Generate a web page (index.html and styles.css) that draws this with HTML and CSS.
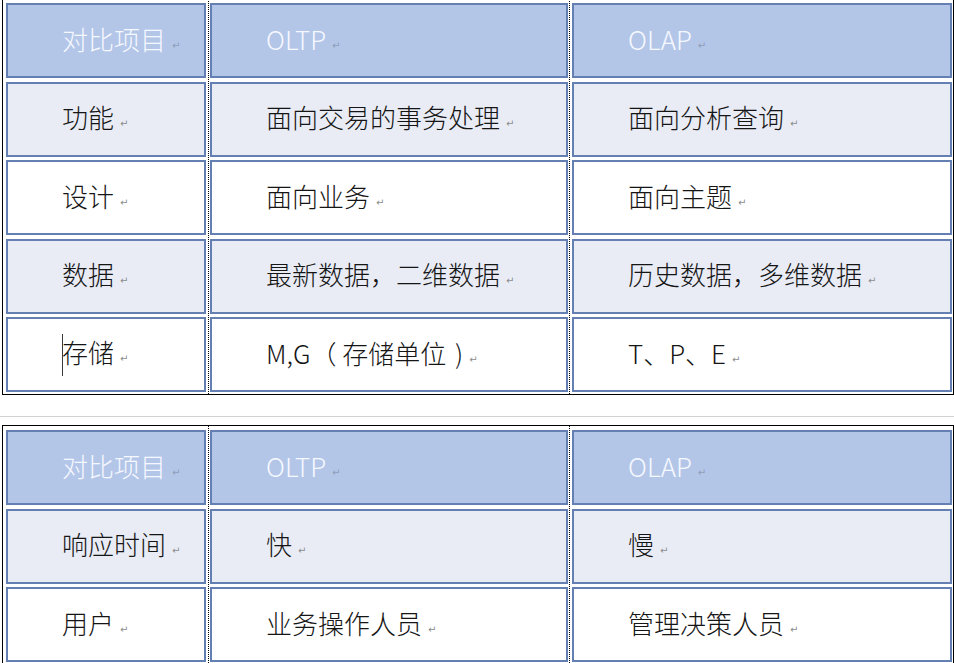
FILE: index.html
```html
<!DOCTYPE html>
<html lang="zh-CN">
<head>
<meta charset="utf-8">
<title>OLTP 与 OLAP 对比</title>
<link rel="stylesheet" href="styles.css">
</head>
<body>
<div class="page">
  <div class="tbl tbl-first">
    <div class="cell head"><span class="txt">对比项目<span class="pm">↵</span></span></div>
    <div class="cell head"><span class="txt">OLTP<span class="pm">↵</span></span></div>
    <div class="cell head"><span class="txt">OLAP<span class="pm">↵</span></span></div>

    <div class="cell alt"><span class="txt">功能<span class="pm">↵</span></span></div>
    <div class="cell alt"><span class="txt">面向交易的事务处理<span class="pm">↵</span></span></div>
    <div class="cell alt"><span class="txt">面向分析查询<span class="pm">↵</span></span></div>

    <div class="cell"><span class="txt">设计<span class="pm">↵</span></span></div>
    <div class="cell"><span class="txt">面向业务<span class="pm">↵</span></span></div>
    <div class="cell"><span class="txt">面向主题<span class="pm">↵</span></span></div>

    <div class="cell alt"><span class="txt">数据<span class="pm">↵</span></span></div>
    <div class="cell alt"><span class="txt">最新数据，二维数据<span class="pm">↵</span></span></div>
    <div class="cell alt"><span class="txt">历史数据，多维数据<span class="pm">↵</span></span></div>

    <div class="cell"><span class="txt"><span class="caret"></span>存储<span class="pm">↵</span></span></div>
    <div class="cell"><span class="txt">M,G（ 存储单位 <span class="paren">)</span><span class="pm">↵</span></span></div>
    <div class="cell"><span class="txt">T、P、E<span class="pm">↵</span></span></div>
  </div>

  <div class="sep"></div>

  <div class="tbl">
    <div class="cell head"><span class="txt">对比项目<span class="pm">↵</span></span></div>
    <div class="cell head"><span class="txt">OLTP<span class="pm">↵</span></span></div>
    <div class="cell head"><span class="txt">OLAP<span class="pm">↵</span></span></div>

    <div class="cell alt"><span class="txt">响应时间<span class="pm">↵</span></span></div>
    <div class="cell alt"><span class="txt">快<span class="pm">↵</span></span></div>
    <div class="cell alt"><span class="txt">慢<span class="pm">↵</span></span></div>

    <div class="cell"><span class="txt">用户<span class="pm">↵</span></span></div>
    <div class="cell"><span class="txt">业务操作人员<span class="pm">↵</span></span></div>
    <div class="cell"><span class="txt">管理决策人员<span class="pm">↵</span></span></div>
  </div>
</div>
</body>
</html>
```

FILE: styles.css
```css
html, body {
  margin: 0;
  padding: 0;
  background: #ffffff;
}

body {
  width: 954px;
  height: 663px;
  overflow: hidden;
  font-family: "Noto Sans CJK SC", "Noto Sans", sans-serif;
  color: #151515;
}

.page {
  padding-left: 2px;
}

.tbl {
  display: grid;
  grid-template-columns: 200px 358px 380px;
  grid-auto-rows: 75px;
  column-gap: 4px;
  row-gap: 3.5px;
  width: max-content;
  border: 1px solid #000;
  padding: 4px 1px 2px 3px;
  background-color: #ffffff;
  background-image:
    repeating-linear-gradient(to bottom, #000 0 1px, transparent 1px 2px),
    repeating-linear-gradient(to bottom, #000 0 1px, transparent 1px 2px);
  background-size: 1px 100%, 1px 100%;
  background-repeat: no-repeat;
  background-position: 205px 0, 566px 0;
}

.tbl-first {
  margin-top: -2px;
}

.sep {
  height: 1px;
  margin: 21px 0 8px -2px;
  background: #d2d2d2;
}

.cell {
  box-sizing: border-box;
  display: flex;
  align-items: center;
  padding: 0 0 4px 54px;
  border: 2px solid #6480b2;
  background: #ffffff;
  font-size: 26px;
  font-weight: 300;
  line-height: 1;
  white-space: pre;
}

.cell.alt {
  background: #e9ecf5;
}

.cell.head {
  background: #b3c6e8;
  color: #f6f8ff;
}

.txt {
  display: inline;
}

.paren {
  margin-left: 3px;
}

.pm {
  font-family: "DejaVu Sans", sans-serif;
  font-size: 10px;
  font-weight: 400;
  color: #8c8c8c;
  margin-left: 6px;
  vertical-align: 1px;
}

.head .pm {
  color: #8f9db8;
}

.caret {
  display: inline-block;
  width: 1px;
  height: 42px;
  margin: -10px -1px -10px 0;
  background: #3a3a3a;
  vertical-align: middle;
}
```
